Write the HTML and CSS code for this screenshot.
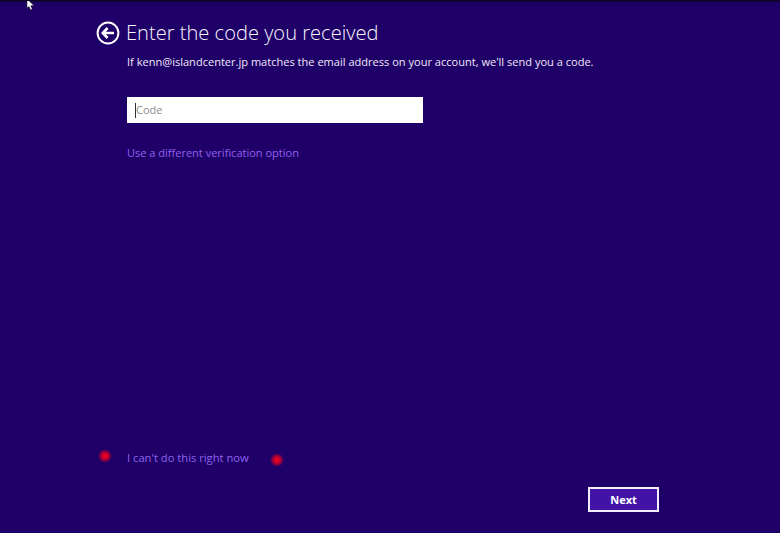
FILE: index.html
```html
<!DOCTYPE html>
<html lang="en">
<head>
<meta charset="utf-8">
<title>Enter the code you received</title>
<link rel="stylesheet" href="styles.css">
</head>
<body>
<div class="page">
  <svg class="cursor" width="10" height="10" viewBox="0 0 10 10"><path d="M1 -2 L1 7 L3 5.4 L4.6 9 L6.3 8.2 L4.8 4.8 L8 4.6 Z" fill="#fff" stroke="#111" stroke-width=".5"/></svg>
  <span class="dot dot-a"></span>
  <span class="dot dot-b"></span>
  <header class="head">
    <svg class="back" width="24" height="24" viewBox="0 0 24 24" fill="none" stroke="#fff"><circle cx="12" cy="12" r="10.4" stroke-width="2"/><path d="M11.6 7 L6.8 12 L11.6 17 M7.2 12 H18" stroke-width="2.6"/></svg>
    <h1 class="title">Enter the code you received</h1>
  </header>
  <main class="body">
    <p class="lead">If kenn@islandcenter.jp matches the email address on your account, we'll send you a code.</p>
    <div class="field"><span class="caret"></span><span class="hint">Code</span></div>
    <a class="link alt">Use a different verification option</a>
    <a class="link skip">I can't do this right now</a>
  </main>
  <footer class="foot"><button class="next">Next</button></footer>
</div>
</body>
</html>
```
FILE: styles.css
```css
* { box-sizing: border-box; }
html, body { margin: 0; height: 100%; }
body { background: #1f0068; overflow: hidden; }
.page {
  position: relative;
  width: 780px;
  height: 533px;
  padding: 19px 0 0 96px;
  display: flex;
  flex-direction: column;
  border-top: 2px solid #10032f;
  font-family: "Open Sans", "Noto Sans", sans-serif;
  color: #fff;
}
.head { display: flex; align-items: center; gap: 6px; height: 24px; }
.back { flex: none; }
.title { margin: 0; font-size: 20.1px; font-weight: 300; line-height: 24px; white-space: nowrap; color: #f8f5fd; }
.body { display: flex; flex-direction: column; align-items: flex-start; padding-left: 31px; flex: 1; }
.lead { margin: 9px 0 0; font-size: 11.05px; line-height: 16px; white-space: nowrap; color: #eee9f8; }
.field {
  margin-top: 27px;
  width: 296px;
  height: 26px;
  background: #fff;
  display: flex;
  align-items: center;
  padding-left: 8px;
  font-size: 11px;
  color: #8d8d8d;
}
.caret { width: 1px; height: 15px; background: #333; }
.hint { line-height: 16px; }
.link { font-size: 11.03px; line-height: 16px; color: #9162ee; white-space: nowrap; }
.alt { margin-top: 22px; }
.skip { margin-top: auto; font-size: 11.2px; }
.foot { display: flex; justify-content: flex-end; padding: 21px 121px 21px 0; }
.next {
  width: 71px;
  height: 25px;
  padding: 0;
  background: #4313a8;
  border: 2px solid #f2eefb;
  color: #fff;
  font-family: inherit;
  font-size: 11px;
  font-weight: 700;
}
.dot {
  position: absolute;
  width: 14px;
  height: 14px;
  border-radius: 50%;
  background: radial-gradient(circle, #f0001e 0, #e00024 20%, #90003f 45%, rgba(31,0,104,0) 70%);
}
.dot-a { left: 98px; top: 447px; }
.dot-b { left: 270px; top: 451px; }
.cursor { position: absolute; left: 26px; top: -1px; }
```
